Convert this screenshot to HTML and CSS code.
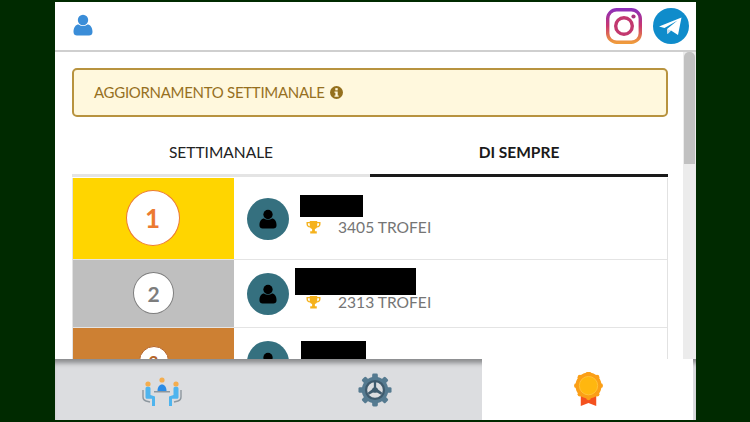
FILE: index.html
```html
<!DOCTYPE html>
<html lang="it">
<head>
<meta charset="utf-8">
<title>Classifica</title>
<link rel="stylesheet" href="styles.css">
</head>
<body>
<div class="app">
  <header class="topbar">
    <svg class="user-icon" viewBox="0 0 20 22"><circle cx="10" cy="6" r="5.2" fill="#3a8dd8"/><path d="M0.5 18c0-5 2.500-7.600 5-7.600 1.500 1 3 1.500 4.500 1.500s3-.5 4.500-1.500c2.500 0 5 2.600 5 7.600 0 2.400-1.500 3.600-3.500 3.600H4c-2 0-3.500-1.200-3.500-3.600z" fill="#3a8dd8"/></svg>
    <div class="socials">
      <svg class="insta" viewBox="0 0 36 36">
        <defs><linearGradient id="ig" x1="0" y1="0" x2="0" y2="1"><stop offset="0" stop-color="#8e2fb8"/><stop offset=".5" stop-color="#c9366f"/><stop offset="1" stop-color="#ef9a3d"/></linearGradient></defs>
        <rect x="1.700" y="1.700" width="32.600" height="32.600" rx="9" fill="none" stroke="url(#ig)" stroke-width="3.400"/>
        <circle cx="18" cy="18" r="8.300" fill="none" stroke="#c2386f" stroke-width="3.400"/>
        <circle cx="27.500" cy="8.500" r="2.100" fill="#a9337f"/>
      </svg>
      <svg class="telegram" viewBox="0 0 36 36">
        <circle cx="18" cy="18" r="18" fill="#0f8ccb"/>
        <path d="M6 18.500 28.500 9.500 25 27 18 22.500 14.500 26 14 21 24.500 12.500 11.500 20z" fill="#fff"/>
        <path d="M14 21 14.500 26 18 22.500z" fill="#c9dcea"/>
      </svg>
    </div>
  </header>
  <main class="content">
    <div class="scroll">
      <div class="notice">AGGIORNAMENTO SETTIMANALE
        <svg class="info" viewBox="0 0 14 14"><circle cx="7" cy="7" r="7" fill="#94701d"/><rect x="5.700" y="2.300" width="2.600" height="2.400" fill="#fff8dd"/><path d="M4.800 5.800h3.500v4.400h1v1.500H4.800v-1.500h1V7.300h-1z" fill="#fff8dd"/></svg>
      </div>
      <nav class="tabs">
        <div class="tab">SETTIMANALE</div>
        <div class="tab tab-active">DI SEMPRE</div>
      </nav>
      <div class="table">
        <div class="row row-first">
          <div class="rank rank-gold"><span class="badge badge-first">1</span></div>
          <div class="player">
            <span class="avatar"><svg viewBox="0 0 20 22"><circle cx="10" cy="6" r="5.200"/><path d="M0.500 18c0-5 2.500-7.600 5-7.600 1.500 1 3 1.500 4.500 1.500s3-.5 4.500-1.500c2.500 0 5 2.600 5 7.600 0 2.400-1.500 3.600-3.500 3.600H4c-2 0-3.500-1.200-3.500-3.600z"/></svg></span>
            <div class="info-col">
              <div class="redact redact-a"></div>
              <div class="score"><svg class="trophy" viewBox="0 0 16 15"><path d="M4 0h8v1h3.500v2.500c0 2-1.500 3.200-3.800 3.500-.5.800-1.200 1.300-2.200 1.600V11h2v2.500H4.500V11h2V8.600c-1-.3-1.700-.8-2.200-1.600C2 6.700.5 5.500.5 3.500V1H4zM2 2.300v1.200c0 1 .7 1.800 2 2.100V2.300zm12 0h-2v3.300c1.300-.3 2-1.100 2-2.100z"/></svg>3405 TROFEI</div>
            </div>
          </div>
        </div>
        <div class="row row-second">
          <div class="rank rank-silver"><span class="badge badge-second">2</span></div>
          <div class="player">
            <span class="avatar"><svg viewBox="0 0 20 22"><circle cx="10" cy="6" r="5.200"/><path d="M0.500 18c0-5 2.500-7.600 5-7.600 1.500 1 3 1.500 4.500 1.500s3-.5 4.500-1.500c2.500 0 5 2.600 5 7.600 0 2.400-1.500 3.600-3.500 3.600H4c-2 0-3.500-1.200-3.500-3.600z"/></svg></span>
            <div class="info-col">
              <div class="redact redact-b"></div>
              <div class="score score-tight"><svg class="trophy" viewBox="0 0 16 15"><path d="M4 0h8v1h3.500v2.500c0 2-1.500 3.200-3.800 3.500-.5.800-1.200 1.300-2.200 1.600V11h2v2.500H4.500V11h2V8.600c-1-.3-1.700-.8-2.200-1.600C2 6.700.5 5.500.5 3.500V1H4zM2 2.300v1.200c0 1 .7 1.800 2 2.100V2.300zm12 0h-2v3.300c1.300-.3 2-1.100 2-2.100z"/></svg>2313 TROFEI</div>
            </div>
          </div>
        </div>
        <div class="row row-third">
          <div class="rank rank-bronze"><span class="badge badge-third">3</span></div>
          <div class="player">
            <span class="avatar"><svg viewBox="0 0 20 22"><circle cx="10" cy="6" r="5.200"/><path d="M0.500 18c0-5 2.500-7.600 5-7.600 1.500 1 3 1.500 4.500 1.500s3-.5 4.500-1.500c2.500 0 5 2.600 5 7.600 0 2.400-1.500 3.600-3.500 3.600H4c-2 0-3.500-1.200-3.500-3.600z"/></svg></span>
            <div class="info-col"><div class="redact redact-c"></div></div>
          </div>
        </div>
      </div>
    </div>
    <div class="scrollbar"><div class="thumb"></div></div>
  </main>
  <footer class="tabbar">
    <div class="bar-item">
      <svg class="ico-team" viewBox="0 0 40 29">
        <circle cx="20" cy="3" r="2.600" fill="#f4ad4e"/><circle cx="6" cy="7" r="2.600" fill="#f4ad4e"/><circle cx="34" cy="7" r="2.600" fill="#f4ad4e"/>
        <path d="M15.500 14c0-4 2-6.500 4.500-6.500s4.500 2.500 4.500 6.500z" fill="#2b8ce6"/>
        <rect x="12" y="14" width="16" height="1.500" fill="#8d979f"/>
        <path d="M3.500 11.500c0-1 .8-1.700 1.700-1.700h1.600c1 0 1.700.7 1.700 1.700V18l4.500 1.500V29h-3v-7.200H5c-1 0-1.500-.6-1.500-1.500z" fill="#4fb4ee"/>
        <path d="M36.500 11.500c0-1-.8-1.700-1.700-1.700h-1.600c-1 0-1.700.7-1.700 1.700V18l-4.500 1.500V29h3v-7.200H35c1 0 1.500-.6 1.500-1.500z" fill="#4fb4ee"/>
        <path d="M1 13v7c0 2 1 3.500 3 4l4 1" fill="none" stroke="#8d979f" stroke-width="1.400"/>
        <path d="M39 13v7c0 2-1 3.500-3 4l-4 1" fill="none" stroke="#8d979f" stroke-width="1.400"/>
      </svg>
    </div>
    <div class="bar-item">
      <svg class="ico-gear" viewBox="0 0 36 36">
        <g fill="#557a90"><circle cx="18" cy="18" r="14"/>
          <rect x="15" y="0.500" width="6" height="35" rx="1.500"/>
          <rect x="15" y="0.500" width="6" height="35" rx="1.500" transform="rotate(45 18 18)"/>
          <rect x="15" y="0.500" width="6" height="35" rx="1.500" transform="rotate(90 18 18)"/>
          <rect x="15" y="0.500" width="6" height="35" rx="1.500" transform="rotate(135 18 18)"/>
        </g>
        <circle cx="18" cy="18" r="9.500" fill="#dcdde0"/>
        <circle cx="18" cy="18" r="9.500" fill="none" stroke="#3f5b6e" stroke-width="2.400"/>
        <path d="M16.800 9h2.400v7l6.500 5-1.300 2-5.200-3h-2.400l-5.200 3-1.300-2 6.500-5z" fill="#3f5b6e"/>
        <circle cx="18" cy="18" r="3" fill="#3f5b6e"/>
      </svg>
    </div>
    <div class="bar-item bar-active">
      <svg class="ico-medal" viewBox="0 0 30 36">
        <path d="M7 21h16v14l-8-3-8 3z" fill="#f4511e"/>
        <circle cx="15" cy="14" r="13.500" fill="#fb9f17"/>
        <g fill="#fb9f17"><circle cx="15" cy="1.500" r="2.500"/><circle cx="15" cy="26.500" r="2.500"/><circle cx="2.500" cy="14" r="2.500"/><circle cx="27.500" cy="14" r="2.500"/><circle cx="6.200" cy="5.200" r="2.500"/><circle cx="23.800" cy="5.200" r="2.500"/><circle cx="6.200" cy="22.800" r="2.500"/><circle cx="23.800" cy="22.800" r="2.500"/></g>
        <circle cx="15" cy="14" r="9.500" fill="#ffb70f" stroke="#ffc33a" stroke-width="1"/>
      </svg>
    </div>
  </footer>
</div>
</body>
</html>
```
FILE: styles.css
```css
* { box-sizing: border-box; }
html, body { margin: 0; height: 100%; overflow: hidden; }
body { background: #002a00; font-family: Lato, "Noto Sans", sans-serif; padding: 2px 54px 2px 55px; }
.app { height: 418px; background: #fff; display: flex; flex-direction: column; overflow: hidden; }

.topbar { height: 50px; flex: none; display: flex; align-items: center; justify-content: space-between; padding: 0 7px 0 18px; border-bottom: 2px solid #cfcfcf; }
.user-icon { width: 20px; height: 22px; margin-bottom: 2px; }
.socials { display: flex; align-items: center; gap: 11px; }
.insta { width: 36px; height: 36px; }
.telegram { width: 36px; height: 36px; }

.content { flex: 1; min-height: 0; display: flex; position: relative; }
.scroll { flex: 1; min-width: 0; overflow: hidden; padding: 16px 15px 0 17px; }
.scrollbar { width: 13px; flex: none; background: #ececec; padding: 0 1px 0 1px; }
.thumb { height: 112px; background: #c1c1c1; border-radius: 5px 5px 0 0; }

.notice { height: 49px; display: flex; align-items: center; gap: 5px; padding-left: 20px; padding-bottom: 1px; background: #fff8dd; border: 2px solid #b8933f; border-radius: 5px; color: #96701f; font-size: 15px; letter-spacing: -.3px; }
.info { width: 13px; height: 13px; }

.tabs { display: flex; margin-top: 17px; }
.tab { flex: 1; height: 43px; display: flex; align-items: center; justify-content: center; padding-bottom: 4px; font-size: 15.500px; color: #222; border-bottom: 3px solid #e4e4e4; }
.tab-active { font-weight: 700; color: #1a1a1a; border-bottom-color: #1a1a1a; }

.table { border: solid #e2e2e2; border-width: 0 1px 0 1px; margin-top: 1px; }
.row { display: flex; }
.row-first { height: 82px; border-bottom: 1px solid #e4e4e4; }
.row-second { height: 68px; border-bottom: 1px solid #e4e4e4; }
.row-third { height: 40px; }
.rank { width: 161px; flex: none; display: flex; align-items: center; justify-content: center; }
.rank-gold { background: #ffd500; padding: 0 2px 2px 0; }
.rank-silver { background: #bfbfbf; padding-bottom: 1px; }
.rank-bronze { background: #cd8033; align-items: flex-start; padding-top: 18px; }
.badge { display: flex; align-items: center; justify-content: center; background: #fff; border-radius: 50%; font-weight: 700; flex: none; }
.badge-first { width: 54px; height: 56px; border: 1px solid #ec7a31; color: #ec7a31; font-size: 26px; }
.badge-second { width: 41px; height: 42px; border: 1px solid #7d7d7d; color: #7d7d7d; font-size: 21px; }
.badge-third { width: 30px; height: 30px; border: 1px solid #b5652a; color: #b5652a; font-size: 17px; }

.player { flex: 1; min-width: 0; display: flex; align-items: flex-start; padding-left: 13px; }
.row-first .player { padding-top: 20px; }
.row-second .player { padding-top: 13px; }
.row-third .player { padding-top: 13px; }
.avatar { width: 42px; height: 42px; flex: none; border-radius: 50%; background: #35707f; display: flex; align-items: center; justify-content: center; }
.avatar svg { width: 18px; height: 22px; fill: #000; }
.info-col { display: flex; flex-direction: column; margin-left: 11px; }
.redact { background: #000; }
.row-first .info-col { margin-top: -3px; }
.row-second .info-col { margin-top: -5px; margin-left: 6px; }
.row-third .info-col { margin-top: 0; margin-left: 12px; }
.redact-a { width: 63px; height: 22px; }
.redact-b { width: 121px; height: 27px; }
.redact-c { width: 65px; height: 18px; }
.score { display: flex; align-items: center; font-size: 15.600px; color: #757575; margin-top: 0; padding-left: 6px; height: 20px; }
.score-tight { padding-left: 11px; margin-top: -3px; }
.trophy { width: 15px; height: 14px; fill: #f5b21c; margin: 2px 17px 0 0; }

.tabbar { height: 61px; flex: none; display: flex; position: relative; background: #dcdde0; box-shadow: inset 0 7px 5px -3px rgba(0,0,0,.38); }
.bar-item { width: 213.500px; display: flex; align-items: center; justify-content: center; }
.bar-active { width: 211px; background: #fff; padding-left: 2px; }
.ico-team { width: 40px; height: 29px; margin-top: 3px; }
.ico-gear { width: 34px; height: 34px; margin-top: 1px; }
.ico-medal { width: 29px; height: 35px; }
```
